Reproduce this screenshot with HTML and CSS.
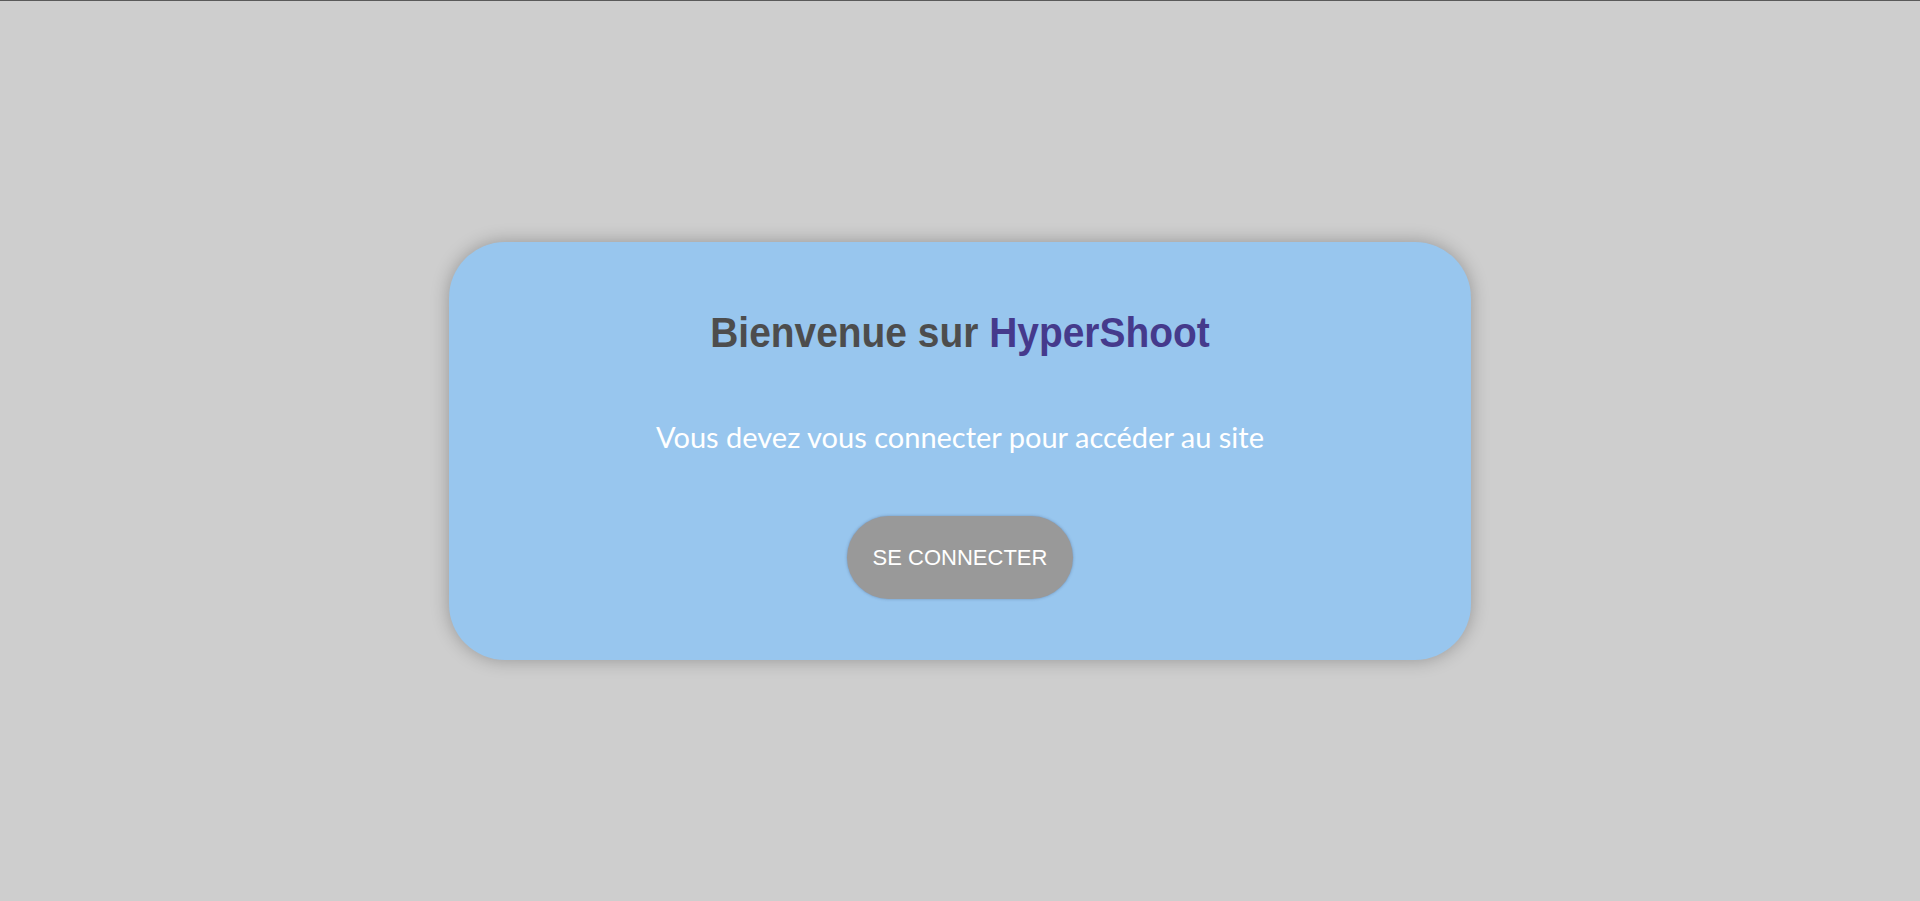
FILE: index.html
```html
<!DOCTYPE html>
<html lang="fr">
<head>
<meta charset="utf-8">
<title>HyperShoot</title>
<link rel="stylesheet" href="styles.css">
</head>
<body>
<main class="page">
  <section class="card">
    <h1 class="title">Bienvenue sur <span class="brand">HyperShoot</span></h1>
    <p class="subtitle">Vous devez vous connecter pour accéder au site</p>
    <button class="login">SE CONNECTER</button>
  </section>
</main>
</body>
</html>
```

FILE: styles.css
```css
html, body {
  margin: 0;
  padding: 0;
  height: 100%;
}
body {
  background: #cecece;
  border-top: 1px solid #5a5a5a;
  box-sizing: border-box;
  font-family: "Liberation Sans", Arial, sans-serif;
}
.page {
  height: 100%;
  display: flex;
  align-items: center;
  justify-content: center;
}
.card {
  width: 1022px;
  height: 418px;
  box-sizing: border-box;
  background: #98c6ee;
  border-radius: 56px;
  box-shadow: 0 0 18px rgba(0, 0, 0, 0.28);
  display: flex;
  flex-direction: column;
  align-items: center;
  padding-top: 64px;
}
.title {
  margin: 0;
  font-family: "Liberation Sans", Arial, sans-serif;
  font-weight: bold;
  font-size: 43px;
  line-height: 52px;
  color: #4d4d4d;
  transform: scaleX(0.905);
  white-space: nowrap;
}
.brand {
  color: #453a8c;
}
.subtitle {
  margin: 61px 0 0;
  font-family: Lato, "Open Sans", sans-serif;
  font-size: 29px;
  line-height: 36px;
  color: #ffffff;
}
.login {
  margin-top: 61px;
  width: 226px;
  height: 83px;
  border: none;
  border-radius: 42px;
  background: #999999;
  color: #ffffff;
  font-family: "Liberation Sans", Arial, sans-serif;
  font-size: 22px;
  box-shadow: 0 0 3px rgba(60, 80, 120, 0.45);
  cursor: pointer;
}
```
